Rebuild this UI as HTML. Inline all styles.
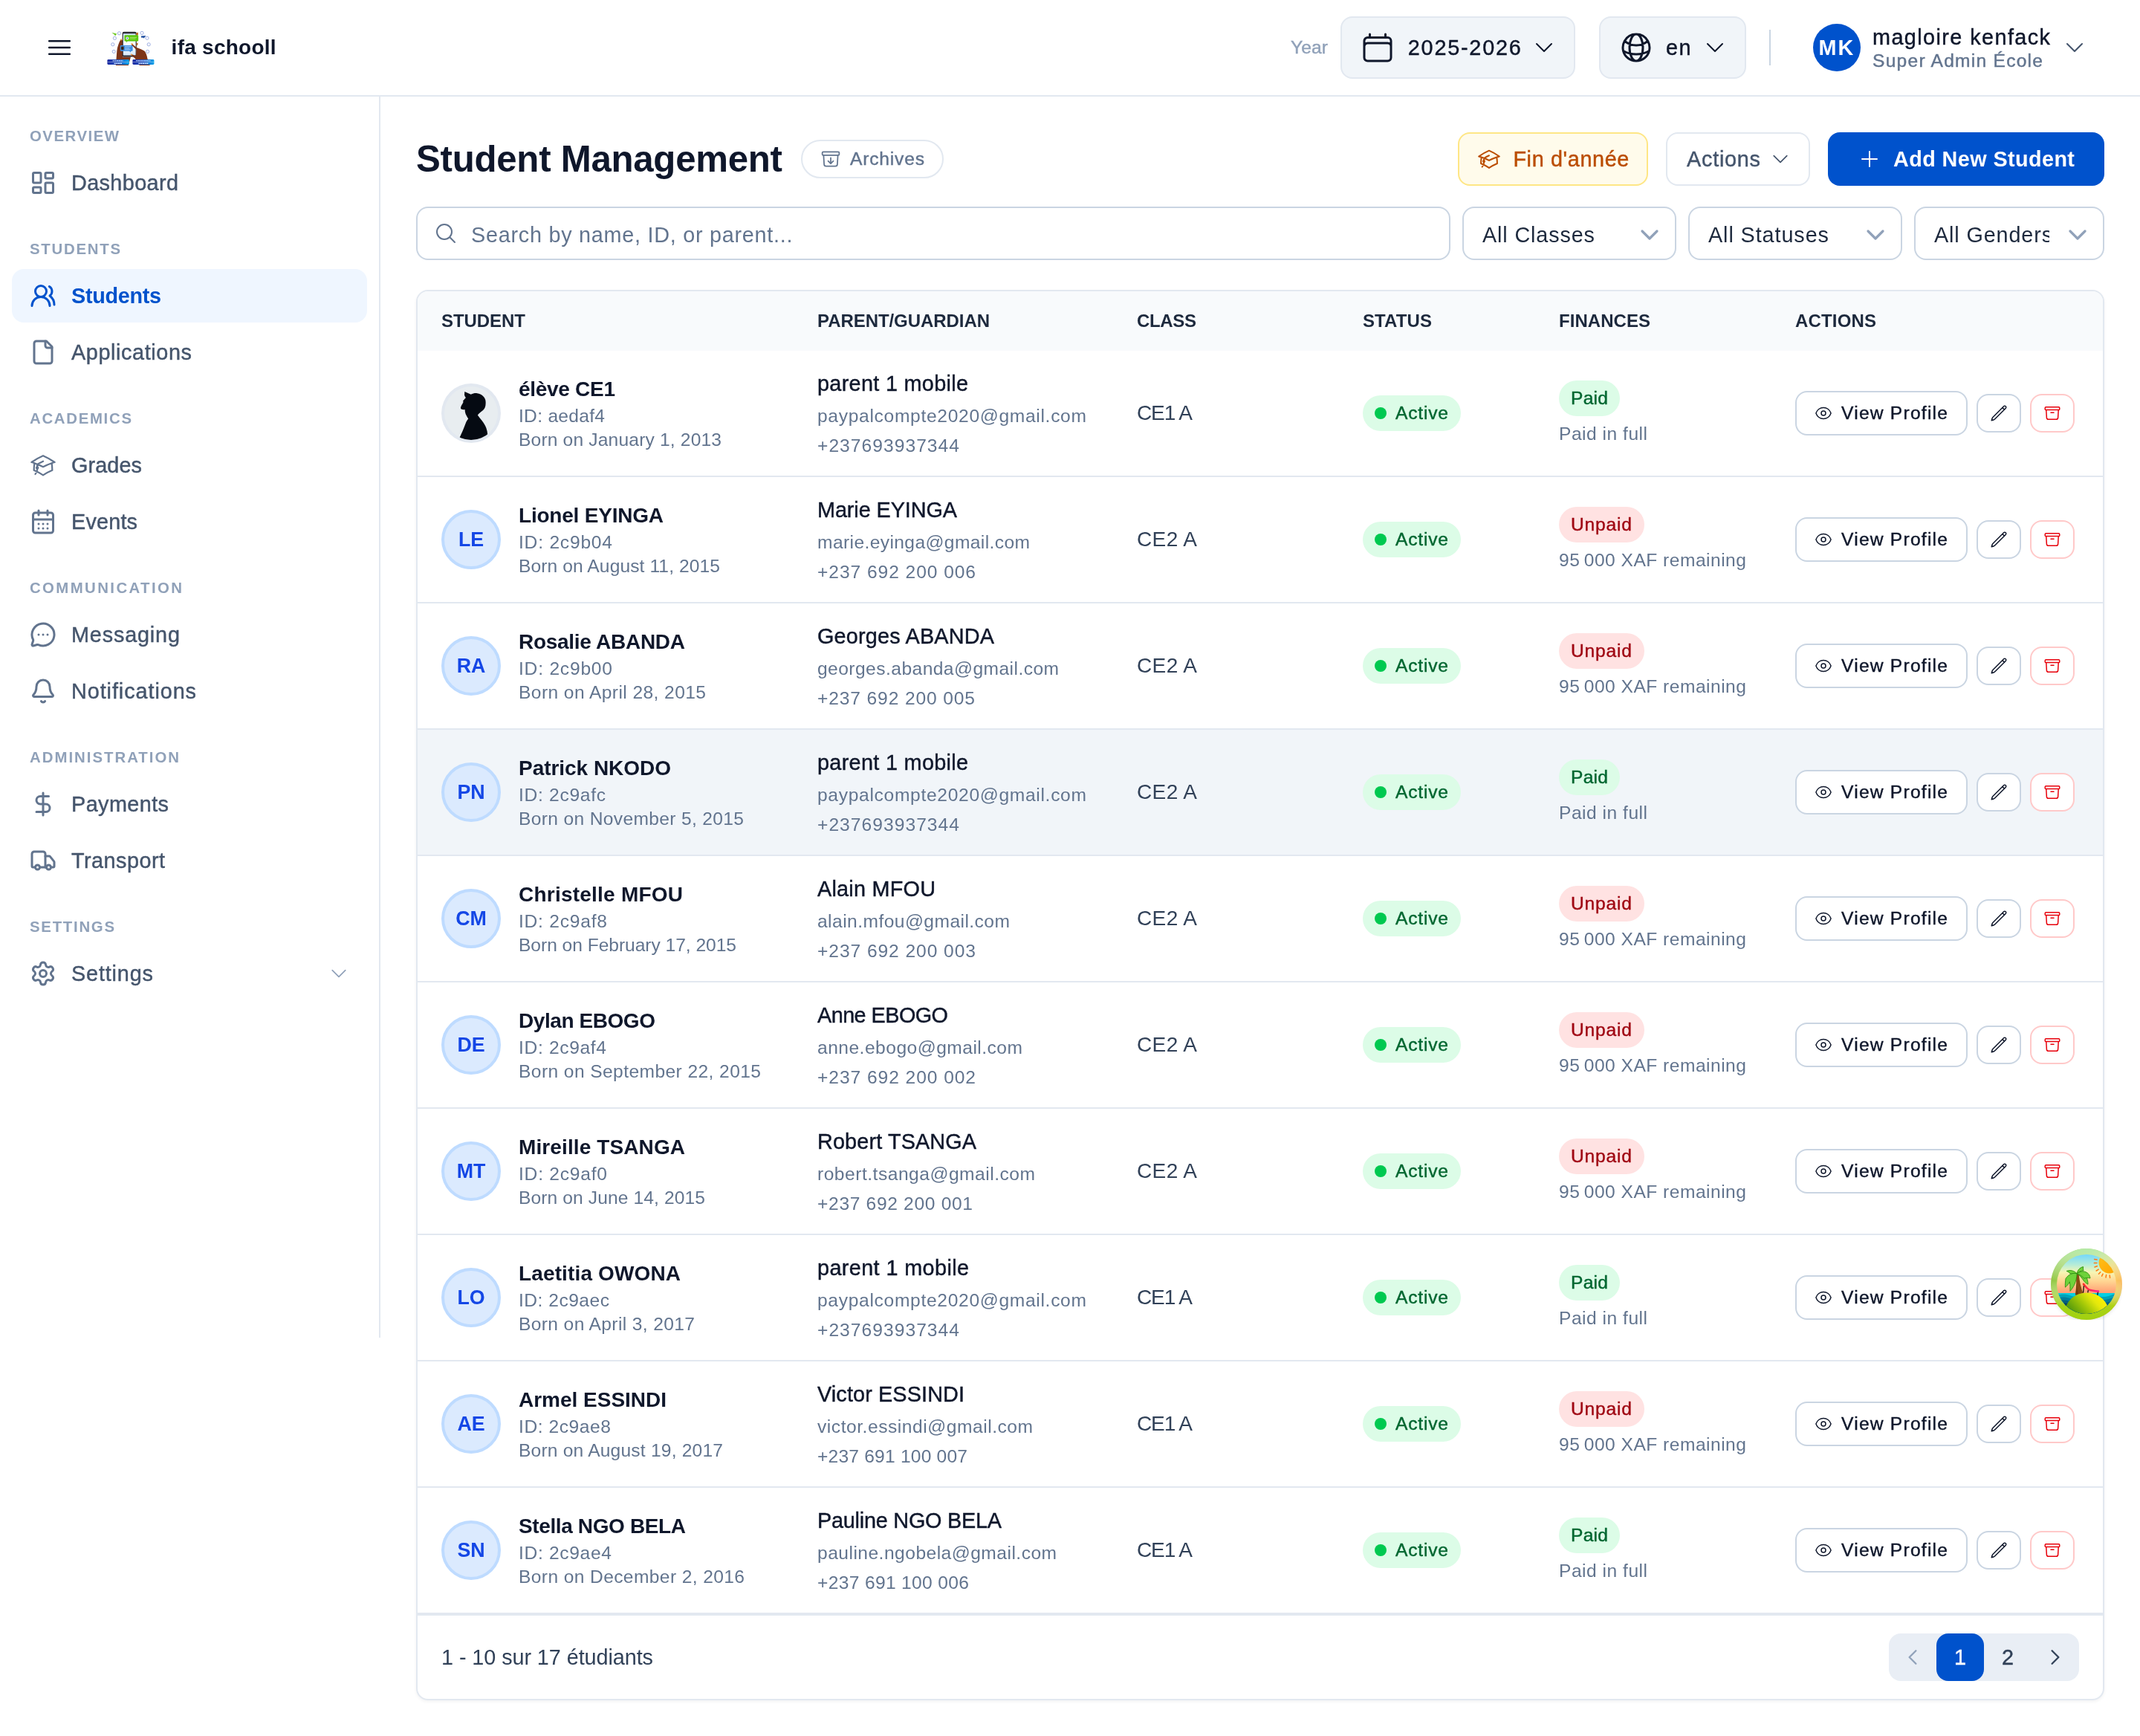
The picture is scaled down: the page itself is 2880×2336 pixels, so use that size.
<!DOCTYPE html>
<html lang="en">
<head>
<meta charset="utf-8">
<title>Student Management</title>
<style>
*{box-sizing:border-box;margin:0;padding:0}
html,body{width:100%;height:100%;overflow:hidden;background:#fff}
body{font-family:"Liberation Sans",Arial,sans-serif;color:#0f172b;-webkit-font-smoothing:antialiased}
#app{position:absolute;left:0;top:0;width:1440px;height:1168px;zoom:2;background:#fff;overflow:hidden;will-change:transform}
button{font:inherit;color:inherit;background:none;border:0;cursor:pointer}
svg.ic{display:block;flex:none}
span{white-space:nowrap}
/* ---------- header ---------- */
.top{position:absolute;left:0;top:0;width:1440px;height:65px;border-bottom:1px solid #e2e8f0;background:#fff}
.top>*{position:absolute}
.hb{left:30px;top:22px;width:20px;height:20px;color:#0f172b}
.logo{left:72px;top:20px;width:32px;height:24px}
.brand{left:115.3px;top:22px;font-size:14px;line-height:20px;font-weight:700;color:#0f172b}
.yearl{left:868.5px;top:24px;font-size:12.3px;line-height:16px;color:#90a1b9}
.hsel{top:11px;height:42px;background:#f1f5f9;border:1px solid #e2e8f0;border-radius:8px;font-size:14.4px;line-height:20px;color:#0f172b}
.hsel>*{position:absolute}
.hsel svg.ic{top:8px}
.hsel span{top:10px}
.hsel svg.hc{top:12px}
.ysel{left:902px;width:158px}
.ysel svg.ic:first-child{left:12px}
.ysel span{left:44.4px}
.ysel svg.hc{left:128px}
.lsel{left:1076px;width:99px}
.lsel svg.ic:first-child{left:12px}
.lsel span{left:44px}
.lsel svg.hc{left:69px}
.vdiv{left:1190.5px;top:20px;width:1px;height:24px;background:#cad5e2}
.uav{left:1220px;top:16px;width:32px;height:32px;border-radius:50%;background:#0052cc;color:#fff;font-size:14.4px;font-weight:700;display:flex;align-items:center;justify-content:center}
.uname{left:1260px;top:15px;font-size:14.4px;line-height:20px;color:#0f172b}
.urole{left:1260px;top:33px;font-size:12.3px;line-height:16px;color:#62748e}
.uchev{left:1388px;top:24px;color:#45556c}
/* ---------- sidebar ---------- */
.side{position:absolute;left:0;top:65px;width:256px;height:835px;border-right:1px solid #e2e8f0;background:#fff;padding:0 8px}
.ng{height:16px;margin:18px 0 6px;padding:.5px 0 0 12px;font-size:10.2px;line-height:16px;font-weight:700;color:#90a1b9;letter-spacing:1px}
.ni{display:flex;align-items:center;height:36px;margin-bottom:2px;padding:0 12px;border-radius:8px;color:#45556c;font-size:14.4px;line-height:20px}
.ni svg.ic{color:#62748e;margin-right:10px}
.ni.on{background:#eff6ff;color:#0052cc;font-weight:700}
.ni.on svg.ic{color:#0052cc}
.ni svg.nchev{margin-left:auto;margin-right:0;color:#90a1b9}

/* ---------- main ---------- */
main{position:absolute;left:0;top:0;width:1440px;height:1168px;pointer-events:none}
main>*{position:absolute}
h1{left:280px;top:91px;font-size:24.6px;line-height:32px;font-weight:700;color:#0f172b}
.arch{left:539px;top:94px;height:26px;width:96px;border:1px solid #e2e8f0;border-radius:13px;display:flex;align-items:center;padding-left:12px;font-size:12.3px;line-height:16px;color:#62748e;background:#fff}
.arch svg.ic{margin-right:6px;color:#62748e}
.btn{top:89px;height:36px;border-radius:8px;display:flex;align-items:center;font-size:14.4px;line-height:20px}
.fin{left:981px;width:128px;background:#fffbeb;border:1px solid #fee685;color:#bb4d00;padding-left:12.2px}
.fin svg.ic{margin-right:8px}
.actb{left:1121px;width:97px;background:#fff;border:1px solid #e2e8f0;color:#45556c;padding-left:13px}
.actb svg.ic{position:absolute;left:69px;top:10px;color:#45556c}
.add{left:1230px;width:186px;background:#0052cc;color:#fff;font-weight:700;padding-left:20px}
.add svg.ic{margin-right:8px}
.search{left:280px;top:139px;width:696px;height:36px;border:1px solid #cad5e2;border-radius:8px;background:#fff;display:flex;align-items:center;padding-left:11px;font-size:14.4px;color:#62748e}
.search svg.ic{margin-right:9px;color:#62748e}
.fsel{top:139px;height:36px;border:1px solid #cad5e2;border-radius:8px;background:#fff;display:flex;align-items:center;padding-left:12.5px;font-size:14.4px;color:#1d293d}
.fsel svg.ic{position:absolute;right:9px;top:10px;color:#90a1b9}
.s1{left:984px;width:144px}.s2{left:1136px;width:144px}.s3{left:1288px;width:128px}
.clip{display:block;overflow:hidden;width:77.5px}
/* ---------- card ---------- */
.card{left:280px;top:195px;width:1136px;height:949px;border:1px solid #e2e8f0;border-radius:8px;background:#fff;overflow:hidden;box-shadow:0 1px 2px rgba(15,23,42,.05)}
.thead{display:flex;height:40px;background:#f8fafc}
.th{padding-left:16px;font-size:12px;line-height:40px;font-weight:700;color:#1d293d}
.c1{width:253px}.c2{width:215px}.c3{width:152px}.c4{width:132px}.c5{width:159px}.c6{width:223px}
.tr{display:flex;height:85px;border-bottom:1px solid #e2e8f0}
.tr.hov{background:#f1f5f9}
.td{padding-left:16px;display:flex;align-items:center;height:84px}
.av{width:40px;height:40px;border-radius:50%;background:#dbeafe;border:2px solid #bedbff;color:#1447e6;font-size:13.4px;font-weight:700;display:flex;align-items:center;justify-content:center;flex:none}
.photo{flex:none;display:block}
.stu{margin-left:12px}
.nm{font-size:14px;line-height:20px;font-weight:700;color:#0f172b}
.sub{font-size:12.3px;line-height:16px;color:#62748e}
.pn{font-size:14.4px;line-height:20px;color:#0f172b}
.pe{margin-top:4px}
.kl{font-size:14px;color:#314158}
.pill{display:inline-flex;align-items:center;height:24px;border-radius:12px;padding:0 8px;font-size:12.3px;line-height:16px}
.act{background:#dcfce7;color:#016630}
.dot{display:block;width:8px;height:8px;border-radius:50%;background:#00c950;margin-right:6px}
.paid{background:#dcfce7;color:#016630}
.unpaid{background:#ffe2e2;color:#9f0712}
.fsub{margin-top:4px}
.vb{height:30px;width:116px;border:1px solid #cad5e2;border-radius:8px;background:#fff;display:flex;align-items:center;padding-left:12px;font-size:12.3px;color:#0f172b}
.vb svg.ic{margin-right:6px}
.ib{height:26px;width:30px;margin-left:6px;border:1px solid #cad5e2;border-radius:8px;background:#fff;display:flex;align-items:center;justify-content:center;color:#0f172b}
.ib.del{border-color:#ffc9c9;color:#e7000b}
.tfoot{position:relative;height:58px;border-top:1px solid #e2e8f0}
.cnt{position:absolute;left:16px;top:18px;font-size:14.4px;line-height:20px;color:#314158}
.pager{position:absolute;right:16px;top:12px;height:32px;width:128px;background:#e9eef5;border-radius:8px;display:flex}
.pg{width:32px;height:32px;display:flex;align-items:center;justify-content:center;font-size:14.4px;color:#314158;border-radius:8px}
.pg.cur{background:#0052cc;color:#fff}
.fab{position:absolute;left:1380px;top:840px;width:48px;height:48px;border-radius:50%}

.pg svg.ic{color:#314158}
.pg:first-child svg.ic{color:#90a1b9}
.m{-webkit-text-stroke:.22px currentColor}

.search span{position:relative;top:1.3px}.fsel span{position:relative;top:1.3px}

@media (max-width:2000px){#app{zoom:1}}
.fsel .clip span{top:0}

</style>
</head>
<body>
<div id="app">
<header class="top">
<button class="hb"><svg class="ic " width="20" height="20" viewBox="0 0 24 24" fill="none" stroke="currentColor" stroke-width="1.6" stroke-linecap="round" stroke-linejoin="round"><path d="M3.75 6.75h16.5M3.75 12h16.5m-16.5 5.25h16.5"/></svg></button>
<div class="logo"><svg width="32" height="24" viewBox="0 0 32 24"><defs><linearGradient id="lgb" x1="0" x2="1" y1="0" y2="0"><stop offset="0" stop-color="#1c2aa0"/><stop offset=".55" stop-color="#1f58c8"/><stop offset="1" stop-color="#08a4ea"/></linearGradient><linearGradient id="lgs" x1="0" x2="0" y1="0" y2="1"><stop offset="0" stop-color="#cfe4fb"/><stop offset=".5" stop-color="#ffffff"/><stop offset="1" stop-color="#d6e8fb"/></linearGradient></defs>
<g fill="none" stroke="#7f95d8" stroke-width=".45" opacity=".85"><circle cx="8.2" cy="2.4" r="1.05"/><circle cx="5.2" cy="5.7" r="1.05"/><circle cx="3.9" cy="9.9" r="1.05"/><circle cx="4.6" cy="14.7" r="1.05"/><circle cx="23.5" cy="2.2" r="1.05"/><circle cx="27" cy="5.6" r="1.05"/><circle cx="28.1" cy="9.9" r="1.05"/><circle cx="27.3" cy="14.7" r="1.05"/></g>
<path d="M3.2 1.9 6.6 2.7 5.6 4.1 4.9 3.3Z" fill="#6cc820"/>
<path d="M22.8 4.2 26.2 4 24.8 5.8 24 5.1 23.4 5.6Z" fill="#17489c"/>
<path d="M5.9 24 6.7 14 C7 11.5 8 8.5 9.3 6.5 L10.9 7.4 10.5 18.2 16 18.2 14.4 24Z" fill="#7d3418"/>
<rect x="10.3" y="1.4" width="9.6" height="16.9" rx="1.1" fill="#2b2b33"/>
<rect x="10.9" y="2.6" width="8.4" height="14.6" rx=".3" fill="url(#lgs)"/>
<path d="M19.6 2.2 20.9 1.8 21 3.4 19.8 4.2Z M19.9 6.2 21 5.9 21 7.3 19.9 7.9Z M19.9 9 20.8 8.7 20.7 10.2 19.9 10.7Z" fill="#c2691f"/>
<path d="M12.2 3.6h8.4a.5.5 0 0 1 .5.5v3.1a.5.5 0 0 1-.5.5h-6.9l-.6.9-.2-.9h-.7a.5.5 0 0 1-.5-.5V4.1a.5.5 0 0 1 .5-.5Z" fill="#5cc80c"/>
<circle cx="13.7" cy="5.7" r="1" fill="#fff"/><circle cx="13.7" cy="5.7" r=".45" fill="#2456c8"/>
<path d="M15.3 5.2h4.6M15.3 6.1h4" stroke="#c9f09a" stroke-width=".35"/>
<path d="M9.4 10.5h7.4a.5.5 0 0 1 .5.5v2.9a.5.5 0 0 1-.5.5h-.6l-.3.8-.9-.8H9.4a.5.5 0 0 1-.5-.5V11a.5.5 0 0 1 .5-.5Z" fill="#3c8ee2"/>
<rect x="9.5" y="11.3" width="1.8" height="2.2" rx=".4" fill="#3a2314"/>
<path d="M12 11.3h4.2M12 12.4h3.2M12 13.4h3.8" stroke="#dbeaff" stroke-width=".35"/>
<path d="M16.6 9.3 19.7 11.9 C22 12.8 24 13.4 25.3 14.4 C26.4 15.8 26.9 17.6 27.2 19.4 L28.9 24 21.9 24 18.8 19.2 16 16.9 16.3 16.4 19.4 17.6 19.9 13.6 16.3 10Z" fill="#7d3418"/>
<path d="M16.3 9 17.3 9.2 17.6 10 16.5 10Z M15.8 16.2 16.9 16.4 17 17.3 16 17.1Z M9 6.3 10 6.2 10.4 7 9.4 7.3Z" fill="#f0a04a"/>
<rect x=".2" y="20" width="14.7" height="3.5" rx=".7" fill="url(#lgb)"/>
<rect x="17.2" y="20" width="14.5" height="3.5" rx=".7" fill="url(#lgb)"/>
<path d="M.2 21.75h14.7M17.2 21.75h14.5" stroke="#fff" stroke-width=".3" opacity=".55"/>
<path d="M3.8 20.9h7M4.8 22.7h5.4M19.6 20.9h9.8M21.2 22.7h6.6" stroke="#fff" stroke-width=".55" opacity=".9" stroke-dasharray="1.1 .25"/>
</svg>
</div>
<span id="brand" class="brand" style="letter-spacing:0.127px">ifa schooll</span>
<span id="yearl" class="yearl m" style="letter-spacing:0.049px">Year</span>
<div class="hsel ysel"><svg class="ic " width="24" height="24" viewBox="0 0 24 24" fill="none" stroke="currentColor" stroke-width="1.5" stroke-linecap="round" stroke-linejoin="round"><path d="M6.75 3v2.25M17.25 3v2.25M3 18.75V7.5a2.25 2.25 0 0 1 2.25-2.25h13.5A2.25 2.25 0 0 1 21 7.5v11.25m-18 0A2.25 2.25 0 0 0 5.25 21h13.5A2.25 2.25 0 0 0 21 18.75m-18 0v-7.5A2.25 2.25 0 0 1 5.25 9h13.5A2.25 2.25 0 0 1 21 11.25v7.5"/></svg><span id="yearv" class="m" style="letter-spacing:0.891px">2025-2026</span><svg class="ic hc" width="16" height="16" viewBox="0 0 24 24" fill="none" stroke="currentColor" stroke-width="1.5" stroke-linecap="round" stroke-linejoin="round"><path d="m19.5 8.25-7.5 7.5-7.5-7.5"/></svg></div>
<div class="hsel lsel"><svg class="ic " width="24" height="24" viewBox="0 0 24 24" fill="none" stroke="currentColor" stroke-width="1.5" stroke-linecap="round" stroke-linejoin="round"><path d="M12 21a9.004 9.004 0 0 0 8.716-6.747M12 21a9.004 9.004 0 0 1-8.716-6.747M12 21c2.485 0 4.5-4.03 4.5-9S14.485 3 12 3m0 18c-2.485 0-4.5-4.03-4.5-9S9.515 3 12 3m0 0a8.997 8.997 0 0 1 7.843 4.582M12 3a8.997 8.997 0 0 0-7.843 4.582m15.686 0A11.953 11.953 0 0 1 12 10.5c-2.998 0-5.74-1.1-7.843-2.918m15.686 0A8.959 8.959 0 0 1 21 12c0 .778-.099 1.533-.284 2.253m0 0A17.919 17.919 0 0 1 12 16.5c-3.162 0-6.133-.815-8.716-2.247m0 0A9.015 9.015 0 0 1 3 12c0-1.605.42-3.113 1.157-4.418"/></svg><span id="langv" class="m" style="letter-spacing:0.680px">en</span><svg class="ic hc" width="16" height="16" viewBox="0 0 24 24" fill="none" stroke="currentColor" stroke-width="1.5" stroke-linecap="round" stroke-linejoin="round"><path d="m19.5 8.25-7.5 7.5-7.5-7.5"/></svg></div>
<div class="vdiv"></div>
<div class="uav"><span id="mk" style="letter-spacing:1.102px">MK</span></div>
<div class="uname"><span id="un" class="m" style="letter-spacing:0.710px">magloire kenfack</span></div>
<div class="urole"><span id="ur" class="m" style="letter-spacing:0.620px">Super Admin École</span></div>
<svg class="ic uchev" width="16" height="16" viewBox="0 0 24 24" fill="none" stroke="currentColor" stroke-width="1.5" stroke-linecap="round" stroke-linejoin="round"><path d="m19.5 8.25-7.5 7.5-7.5-7.5"/></svg>
</header>
<aside class="side">
<div class="ng"><span id="g0" style="letter-spacing:0.746px">OVERVIEW</span></div>
<a class="ni"><svg class="ic " width="18" height="18" viewBox="0 0 24 24" fill="none" stroke="currentColor" stroke-width="2" stroke-linecap="round" stroke-linejoin="round"><rect x="3" y="3" width="7" height="9" rx="1"/><rect x="14" y="3" width="7" height="5" rx="1"/><rect x="14" y="12" width="7" height="9" rx="1"/><rect x="3" y="16" width="7" height="5" rx="1"/></svg><span id="n0" class="nl m" style="letter-spacing:0.194px">Dashboard</span></a>
<div class="ng"><span id="g1" style="letter-spacing:0.865px">STUDENTS</span></div>
<a class="ni on"><svg class="ic " width="18" height="18" viewBox="0 0 24 24" fill="none" stroke="currentColor" stroke-width="2" stroke-linecap="round" stroke-linejoin="round"><path d="M18 21a8 8 0 0 0-16 0"/><circle cx="10" cy="8" r="5"/><path d="M22 20c0-3.37-2-6.5-4-8a5 5 0 0 0-.45-8.3"/></svg><span id="n1" class="nl" style="letter-spacing:-0.157px">Students</span></a>
<a class="ni"><svg class="ic " width="18" height="18" viewBox="0 0 24 24" fill="none" stroke="currentColor" stroke-width="2" stroke-linecap="round" stroke-linejoin="round"><path d="M15 2H6a2 2 0 0 0-2 2v16a2 2 0 0 0 2 2h12a2 2 0 0 0 2-2V7Z"/><path d="M14 2v4a2 2 0 0 0 2 2h4"/></svg><span id="n2" class="nl m" style="letter-spacing:0.305px">Applications</span></a>
<div class="ng"><span id="g2" style="letter-spacing:0.844px">ACADEMICS</span></div>
<a class="ni"><svg class="ic " width="18" height="18" viewBox="0 0 24 24" fill="none" stroke="currentColor" stroke-width="1.5" stroke-linecap="round" stroke-linejoin="round"><path d="M4.26 10.147a60.438 60.438 0 0 0-.491 6.347A48.62 48.62 0 0 1 12 20.904a48.62 48.62 0 0 1 8.232-4.41 60.46 60.46 0 0 0-.491-6.347m-15.482 0a50.636 50.636 0 0 0-2.658-.813A59.906 59.906 0 0 1 12 3.493a59.903 59.903 0 0 1 10.399 5.84c-.896.248-1.783.52-2.658.814m-15.482 0A50.717 50.717 0 0 1 12 13.489a50.702 50.702 0 0 1 7.74-3.342M6.75 15a.75.75 0 1 0 0-1.5.75.75 0 0 0 0 1.5Zm0 0v-3.675A55.378 55.378 0 0 1 12 8.443m-7.007 11.55A5.981 5.981 0 0 0 6.75 15.75v-1.5"/></svg><span id="n3" class="nl m" style="letter-spacing:0.056px">Grades</span></a>
<a class="ni"><svg class="ic " width="18" height="18" viewBox="0 0 24 24" fill="none" stroke="currentColor" stroke-width="2" stroke-linecap="round" stroke-linejoin="round"><path d="M8 2v4"/><path d="M16 2v4"/><rect width="18" height="18" x="3" y="4" rx="2"/><path d="M3 10h18"/><path d="M8 14h.01"/><path d="M12 14h.01"/><path d="M16 14h.01"/><path d="M8 18h.01"/><path d="M12 18h.01"/><path d="M16 18h.01"/></svg><span id="n4" class="nl m" style="letter-spacing:0.095px">Events</span></a>
<div class="ng"><span id="g3" style="letter-spacing:1.195px">COMMUNICATION</span></div>
<a class="ni"><svg class="ic " width="18" height="18" viewBox="0 0 24 24" fill="none" stroke="currentColor" stroke-width="2" stroke-linecap="round" stroke-linejoin="round"><path d="M2.992 16.342a2 2 0 0 1 .094 1.167l-1.065 3.29a1 1 0 0 0 1.236 1.168l3.413-.998a2 2 0 0 1 1.099.092 10 10 0 1 0-4.777-4.719"/><path d="M8 12h.01"/><path d="M12 12h.01"/><path d="M16 12h.01"/></svg><span id="n5" class="nl m" style="letter-spacing:0.420px">Messaging</span></a>
<a class="ni"><svg class="ic " width="18" height="18" viewBox="0 0 24 24" fill="none" stroke="currentColor" stroke-width="2" stroke-linecap="round" stroke-linejoin="round"><path d="M10.268 21a2 2 0 0 0 3.464 0"/><path d="M3.262 15.326A1 1 0 0 0 4 17h16a1 1 0 0 0 .74-1.673C19.41 13.956 18 12.499 18 8A6 6 0 0 0 6 8c0 4.499-1.411 5.956-2.738 7.326"/></svg><span id="n6" class="nl m" style="letter-spacing:0.464px">Notifications</span></a>
<div class="ng"><span id="g4" style="letter-spacing:0.992px">ADMINISTRATION</span></div>
<a class="ni"><svg class="ic " width="18" height="18" viewBox="0 0 24 24" fill="none" stroke="currentColor" stroke-width="2" stroke-linecap="round" stroke-linejoin="round"><line x1="12" x2="12" y1="2" y2="22"/><path d="M17 5H9.5a3.5 3.5 0 0 0 0 7h5a3.5 3.5 0 0 1 0 7H6"/></svg><span id="n7" class="nl m" style="letter-spacing:0.210px">Payments</span></a>
<a class="ni"><svg class="ic " width="18" height="18" viewBox="0 0 24 24" fill="none" stroke="currentColor" stroke-width="2" stroke-linecap="round" stroke-linejoin="round"><path d="M14 18V6a2 2 0 0 0-2-2H4a2 2 0 0 0-2 2v11a1 1 0 0 0 1 1h2"/><path d="M15 18H9"/><path d="M19 18h2a1 1 0 0 0 1-1v-3.65a1 1 0 0 0-.22-.624l-3.48-4.35A1 1 0 0 0 17.52 8H14"/><circle cx="17" cy="18" r="2"/><circle cx="7" cy="18" r="2"/></svg><span id="n8" class="nl m" style="letter-spacing:0.241px">Transport</span></a>
<div class="ng"><span id="g5" style="letter-spacing:0.860px">SETTINGS</span></div>
<a class="ni"><svg class="ic " width="18" height="18" viewBox="0 0 24 24" fill="none" stroke="currentColor" stroke-width="2" stroke-linecap="round" stroke-linejoin="round"><path d="M9.671 4.136a2.34 2.34 0 0 1 4.659 0 2.34 2.34 0 0 0 3.319 1.915 2.34 2.34 0 0 1 2.33 4.033 2.34 2.34 0 0 0 0 3.831 2.34 2.34 0 0 1-2.33 4.033 2.34 2.34 0 0 0-3.319 1.915 2.34 2.34 0 0 1-4.659 0 2.34 2.34 0 0 0-3.32-1.915 2.34 2.34 0 0 1-2.33-4.033 2.34 2.34 0 0 0 0-3.831A2.34 2.34 0 0 1 6.35 6.051a2.34 2.34 0 0 0 3.319-1.915"/><circle cx="12" cy="12" r="3"/></svg><span id="n9" class="nl m" style="letter-spacing:0.423px">Settings</span><svg class="ic nchev" width="14" height="14" viewBox="0 0 24 24" fill="none" stroke="currentColor" stroke-width="1.5" stroke-linecap="round" stroke-linejoin="round"><path d="m19.5 8.25-7.5 7.5-7.5-7.5"/></svg></a>
</aside>
<main>
<h1><span id="h1" style="letter-spacing:-0.129px">Student Management</span></h1>
<a class="arch"><svg class="ic " width="14" height="14" viewBox="0 0 24 24" fill="none" stroke="currentColor" stroke-width="1.5" stroke-linecap="round" stroke-linejoin="round"><path d="m20.25 7.5-.625 10.632a2.25 2.25 0 0 1-2.247 2.118H6.622a2.25 2.25 0 0 1-2.247-2.118L3.75 7.5m8.25 3v6.75m0 0-3-3m3 3 3-3M3.375 7.5h17.25c.621 0 1.125-.504 1.125-1.125v-1.5c0-.621-.504-1.125-1.125-1.125H3.375c-.621 0-1.125.504-1.125 1.125v1.5c0 .621.504 1.125 1.125 1.125Z"/></svg><span id="archt" class="m" style="letter-spacing:0.406px">Archives</span></a>
<button class="btn fin"><svg class="ic " width="16" height="16" viewBox="0 0 24 24" fill="none" stroke="currentColor" stroke-width="1.5" stroke-linecap="round" stroke-linejoin="round"><path d="M4.26 10.147a60.438 60.438 0 0 0-.491 6.347A48.62 48.62 0 0 1 12 20.904a48.62 48.62 0 0 1 8.232-4.41 60.46 60.46 0 0 0-.491-6.347m-15.482 0a50.636 50.636 0 0 0-2.658-.813A59.906 59.906 0 0 1 12 3.493a59.903 59.903 0 0 1 10.399 5.84c-.896.248-1.783.52-2.658.814m-15.482 0A50.717 50.717 0 0 1 12 13.489a50.702 50.702 0 0 1 7.74-3.342M6.75 15a.75.75 0 1 0 0-1.5.75.75 0 0 0 0 1.5Zm0 0v-3.675A55.378 55.378 0 0 1 12 8.443m-7.007 11.55A5.981 5.981 0 0 0 6.75 15.75v-1.5"/></svg><span id="fint" class="m" style="letter-spacing:0.320px">Fin d'année</span></button>
<button class="btn actb"><span id="actt" class="m" style="letter-spacing:0.380px">Actions</span><svg class="ic " width="14" height="14" viewBox="0 0 24 24" fill="none" stroke="currentColor" stroke-width="1.5" stroke-linecap="round" stroke-linejoin="round"><path d="m19.5 8.25-7.5 7.5-7.5-7.5"/></svg></button>
<button class="btn add"><svg class="ic " width="16" height="16" viewBox="0 0 24 24" fill="none" stroke="currentColor" stroke-width="1.5" stroke-linecap="round" stroke-linejoin="round"><path d="M12 4.5v15m7.5-7.5h-15"/></svg><span id="addt" style="letter-spacing:0.200px">Add New Student</span></button>
<div class="search"><svg class="ic " width="16" height="16" viewBox="0 0 24 24" fill="none" stroke="currentColor" stroke-width="1.5" stroke-linecap="round" stroke-linejoin="round"><path d="m21 21-5.197-5.197m0 0A7.5 7.5 0 1 0 5.196 5.196a7.5 7.5 0 0 0 10.607 10.607Z"/></svg><span id="ph" style="letter-spacing:0.367px">Search by name, ID, or parent...</span></div>
<div class="fsel s1"><span id="f1" style="letter-spacing:0.428px">All Classes</span><svg class="ic " width="16" height="16" viewBox="0 0 24 24" fill="none" stroke="currentColor" stroke-width="2.4" stroke-linecap="round" stroke-linejoin="round"><path d="m19.5 8.25-7.5 7.5-7.5-7.5"/></svg></div>
<div class="fsel s2"><span id="f2" style="letter-spacing:0.451px">All Statuses</span><svg class="ic " width="16" height="16" viewBox="0 0 24 24" fill="none" stroke="currentColor" stroke-width="2.4" stroke-linecap="round" stroke-linejoin="round"><path d="m19.5 8.25-7.5 7.5-7.5-7.5"/></svg></div>
<div class="fsel s3"><span class="clip"><span id="f3" style="letter-spacing:0.430px">All Genders</span></span><svg class="ic " width="16" height="16" viewBox="0 0 24 24" fill="none" stroke="currentColor" stroke-width="2.4" stroke-linecap="round" stroke-linejoin="round"><path d="m19.5 8.25-7.5 7.5-7.5-7.5"/></svg></div>
<section class="card">
<div class="thead">
<div class="th c1"><span id="th1" style="letter-spacing:-0.029px">STUDENT</span></div><div class="th c2"><span id="th2" style="letter-spacing:-0.032px">PARENT/GUARDIAN</span></div><div class="th c3"><span id="th3" style="letter-spacing:-0.168px">CLASS</span></div><div class="th c4"><span id="th4" style="letter-spacing:0.056px">STATUS</span></div><div class="th c5"><span id="th5" style="letter-spacing:0.022px">FINANCES</span></div><div class="th c6"><span id="th6" style="letter-spacing:0.083px">ACTIONS</span></div>
</div>
<div class="tr">
<div class="td c1"><svg class="photo" width="40" height="40" viewBox="0 0 40 40"><defs><clipPath id="pc"><circle cx="20" cy="20" r="18"/></clipPath></defs><circle cx="20" cy="20" r="20" fill="#e2e8f0"/><circle cx="20" cy="20" r="18" fill="#e8edf0"/><g clip-path="url(#pc)"><path d="M15.65 5.5 L19.9 7.4 C21.3 6.6 22.8 6.4 24.1 6.6 C25.7 6.9 27 7.5 27.9 8.4 C29.2 9.6 29.85 11 29.8 12.4 C29.9 13.9 29.75 15.2 29.3 16.3 C28.7 17.6 27.8 18.5 26.6 19.1 C25.8 19.7 25 20.4 24.4 21.2 C25.3 22.5 26.2 23.6 27.2 24.9 C28.5 26.5 29.5 28.2 30.2 30 C30.7 31.4 31 32.8 31.1 34.2 L31.5 40 L11.5 40 L12.4 36.1 C13.1 34.500 13.9 33 14.5 31.500 C15.300 29.600 16 27.700 16.700 25.900 C17.100 25.100 17.600 24.400 18.100 23.700 C17.400 22.700 16.800 21.600 16.300 20.500 C16 19.500 15.800 18.500 15.800 17.500 C15.100 17.700 14.300 17.700 13.700 17.400 C13.200 17.200 12.900 16.800 13 16.300 L13.300 15.300 C13.500 14.800 13.800 14.300 14.100 13.900 L14.800 12.400 L14.500 11.700 L15.200 11 C15.600 10.500 16 10.100 16.450 9.650 C16 9.100 15.700 8.500 15.500 7.800 Z" fill="#050a12"/></g></svg><div class="stu"><div class="nm"><span id="nm0" style="letter-spacing:-0.146px">élève CE1</span></div><div class="sub"><span id="id0" style="letter-spacing:0.140px">ID: aedaf4</span></div><div class="sub"><span id="bo0" style="letter-spacing:0.083px">Born on January 1, 2013</span></div></div></div>
<div class="td c2"><div class="par"><div class="pn"><span id="pn0" class="m" style="letter-spacing:0.160px">parent 1 mobile</span></div><div class="sub pe"><span id="em0" style="letter-spacing:0.342px">paypalcompte2020@gmail.com</span></div><div class="sub pe"><span id="ph0" style="letter-spacing:0.520px">+237693937344</span></div></div></div>
<div class="td c3"><span id="kl0" class="kl" style="letter-spacing:-0.549px">CE1 A</span></div>
<div class="td c4"><span class="pill act"><i class="dot"></i><span id="st0" class="m" style="letter-spacing:0.402px">Active</span></span></div>
<div class="td c5"><div><span class="pill paid"><span id="fp0" class="m" style="letter-spacing:0.128px">Paid</span></span><div class="sub fsub"><span id="fs0" style="letter-spacing:0.251px">Paid in full</span></div></div></div>
<div class="td c6"><button class="vb"><svg class="ic " width="12" height="12" viewBox="0 0 24 24" fill="none" stroke="currentColor" stroke-width="1.5" stroke-linecap="round" stroke-linejoin="round"><path d="M2.036 12.322a1.012 1.012 0 0 1 0-.639C3.423 7.51 7.36 4.5 12 4.5c4.638 0 8.573 3.007 9.963 7.178.07.207.07.431 0 .639C20.577 16.49 16.64 19.5 12 19.5c-4.638 0-8.573-3.007-9.963-7.178Z"/><path d="M15 12a3 3 0 1 1-6 0 3 3 0 0 1 6 0Z"/></svg><span id="vp0" class="m" style="letter-spacing:0.617px">View Profile</span></button><button class="ib"><svg class="ic " width="12" height="12" viewBox="0 0 24 24" fill="none" stroke="currentColor" stroke-width="1.5" stroke-linecap="round" stroke-linejoin="round"><path d="m16.862 4.487 1.687-1.688a1.875 1.875 0 1 1 2.652 2.652L6.832 19.82a4.5 4.5 0 0 1-1.897 1.13l-2.685.8.8-2.685a4.5 4.5 0 0 1 1.13-1.897L16.863 4.487Zm0 0L19.5 7.125"/></svg></button><button class="ib del"><svg class="ic " width="12" height="12" viewBox="0 0 24 24" fill="none" stroke="currentColor" stroke-width="1.5" stroke-linecap="round" stroke-linejoin="round"><path d="m20.25 7.5-.625 10.632a2.25 2.25 0 0 1-2.247 2.118H6.622a2.25 2.25 0 0 1-2.247-2.118L3.75 7.5M10 11.25h4M3.375 7.5h17.25c.621 0 1.125-.504 1.125-1.125v-1.5c0-.621-.504-1.125-1.125-1.125H3.375c-.621 0-1.125.504-1.125 1.125v1.5c0 .621.504 1.125 1.125 1.125Z"/></svg></button></div>
</div>
<div class="tr">
<div class="td c1"><div class="av"><span id="ini1">LE</span></div><div class="stu"><div class="nm"><span id="nm1" style="letter-spacing:-0.107px">Lionel EYINGA</span></div><div class="sub"><span id="id1" style="letter-spacing:0.391px">ID: 2c9b04</span></div><div class="sub"><span id="bo1" style="letter-spacing:0.047px">Born on August 11, 2015</span></div></div></div>
<div class="td c2"><div class="par"><div class="pn"><span id="pn1" class="m" style="letter-spacing:-0.037px">Marie EYINGA</span></div><div class="sub pe"><span id="em1" style="letter-spacing:0.195px">marie.eyinga@gmail.com</span></div><div class="sub pe"><span id="ph1" style="letter-spacing:0.468px">+237 692 200 006</span></div></div></div>
<div class="td c3"><span id="kl1" class="kl" style="letter-spacing:0.201px">CE2 A</span></div>
<div class="td c4"><span class="pill act"><i class="dot"></i><span id="st1" class="m" style="letter-spacing:0.402px">Active</span></span></div>
<div class="td c5"><div><span class="pill unpaid"><span id="fp1" class="m" style="letter-spacing:0.406px">Unpaid</span></span><div class="sub fsub"><span id="fs1" style="letter-spacing:0.241px">95&#8239;000 XAF remaining</span></div></div></div>
<div class="td c6"><button class="vb"><svg class="ic " width="12" height="12" viewBox="0 0 24 24" fill="none" stroke="currentColor" stroke-width="1.5" stroke-linecap="round" stroke-linejoin="round"><path d="M2.036 12.322a1.012 1.012 0 0 1 0-.639C3.423 7.51 7.36 4.5 12 4.5c4.638 0 8.573 3.007 9.963 7.178.07.207.07.431 0 .639C20.577 16.49 16.64 19.5 12 19.5c-4.638 0-8.573-3.007-9.963-7.178Z"/><path d="M15 12a3 3 0 1 1-6 0 3 3 0 0 1 6 0Z"/></svg><span id="vp1" class="m" style="letter-spacing:0.617px">View Profile</span></button><button class="ib"><svg class="ic " width="12" height="12" viewBox="0 0 24 24" fill="none" stroke="currentColor" stroke-width="1.5" stroke-linecap="round" stroke-linejoin="round"><path d="m16.862 4.487 1.687-1.688a1.875 1.875 0 1 1 2.652 2.652L6.832 19.82a4.5 4.5 0 0 1-1.897 1.13l-2.685.8.8-2.685a4.5 4.5 0 0 1 1.13-1.897L16.863 4.487Zm0 0L19.5 7.125"/></svg></button><button class="ib del"><svg class="ic " width="12" height="12" viewBox="0 0 24 24" fill="none" stroke="currentColor" stroke-width="1.5" stroke-linecap="round" stroke-linejoin="round"><path d="m20.25 7.5-.625 10.632a2.25 2.25 0 0 1-2.247 2.118H6.622a2.25 2.25 0 0 1-2.247-2.118L3.75 7.5M10 11.25h4M3.375 7.5h17.25c.621 0 1.125-.504 1.125-1.125v-1.5c0-.621-.504-1.125-1.125-1.125H3.375c-.621 0-1.125.504-1.125 1.125v1.5c0 .621.504 1.125 1.125 1.125Z"/></svg></button></div>
</div>
<div class="tr">
<div class="td c1"><div class="av"><span id="ini2">RA</span></div><div class="stu"><div class="nm"><span id="nm2" style="letter-spacing:-0.142px">Rosalie ABANDA</span></div><div class="sub"><span id="id2" style="letter-spacing:0.392px">ID: 2c9b00</span></div><div class="sub"><span id="bo2" style="letter-spacing:0.205px">Born on April 28, 2015</span></div></div></div>
<div class="td c2"><div class="par"><div class="pn"><span id="pn2" class="m" style="letter-spacing:0.103px">Georges ABANDA</span></div><div class="sub pe"><span id="em2" style="letter-spacing:0.222px">georges.abanda@gmail.com</span></div><div class="sub pe"><span id="ph2" style="letter-spacing:0.434px">+237 692 200 005</span></div></div></div>
<div class="td c3"><span id="kl2" class="kl" style="letter-spacing:0.201px">CE2 A</span></div>
<div class="td c4"><span class="pill act"><i class="dot"></i><span id="st2" class="m" style="letter-spacing:0.402px">Active</span></span></div>
<div class="td c5"><div><span class="pill unpaid"><span id="fp2" class="m" style="letter-spacing:0.406px">Unpaid</span></span><div class="sub fsub"><span id="fs2" style="letter-spacing:0.241px">95&#8239;000 XAF remaining</span></div></div></div>
<div class="td c6"><button class="vb"><svg class="ic " width="12" height="12" viewBox="0 0 24 24" fill="none" stroke="currentColor" stroke-width="1.5" stroke-linecap="round" stroke-linejoin="round"><path d="M2.036 12.322a1.012 1.012 0 0 1 0-.639C3.423 7.51 7.36 4.5 12 4.5c4.638 0 8.573 3.007 9.963 7.178.07.207.07.431 0 .639C20.577 16.49 16.64 19.5 12 19.5c-4.638 0-8.573-3.007-9.963-7.178Z"/><path d="M15 12a3 3 0 1 1-6 0 3 3 0 0 1 6 0Z"/></svg><span id="vp2" class="m" style="letter-spacing:0.617px">View Profile</span></button><button class="ib"><svg class="ic " width="12" height="12" viewBox="0 0 24 24" fill="none" stroke="currentColor" stroke-width="1.5" stroke-linecap="round" stroke-linejoin="round"><path d="m16.862 4.487 1.687-1.688a1.875 1.875 0 1 1 2.652 2.652L6.832 19.82a4.5 4.5 0 0 1-1.897 1.13l-2.685.8.8-2.685a4.5 4.5 0 0 1 1.13-1.897L16.863 4.487Zm0 0L19.5 7.125"/></svg></button><button class="ib del"><svg class="ic " width="12" height="12" viewBox="0 0 24 24" fill="none" stroke="currentColor" stroke-width="1.5" stroke-linecap="round" stroke-linejoin="round"><path d="m20.25 7.5-.625 10.632a2.25 2.25 0 0 1-2.247 2.118H6.622a2.25 2.25 0 0 1-2.247-2.118L3.75 7.5M10 11.25h4M3.375 7.5h17.25c.621 0 1.125-.504 1.125-1.125v-1.5c0-.621-.504-1.125-1.125-1.125H3.375c-.621 0-1.125.504-1.125 1.125v1.5c0 .621.504 1.125 1.125 1.125Z"/></svg></button></div>
</div>
<div class="tr hov">
<div class="td c1"><div class="av"><span id="ini3">PN</span></div><div class="stu"><div class="nm"><span id="nm3" style="letter-spacing:-0.018px">Patrick NKODO</span></div><div class="sub"><span id="id3" style="letter-spacing:0.348px">ID: 2c9afc</span></div><div class="sub"><span id="bo3" style="letter-spacing:0.167px">Born on November 5, 2015</span></div></div></div>
<div class="td c2"><div class="par"><div class="pn"><span id="pn3" class="m" style="letter-spacing:0.161px">parent 1 mobile</span></div><div class="sub pe"><span id="em3" style="letter-spacing:0.342px">paypalcompte2020@gmail.com</span></div><div class="sub pe"><span id="ph3" style="letter-spacing:0.520px">+237693937344</span></div></div></div>
<div class="td c3"><span id="kl3" class="kl" style="letter-spacing:0.201px">CE2 A</span></div>
<div class="td c4"><span class="pill act"><i class="dot"></i><span id="st3" class="m" style="letter-spacing:0.402px">Active</span></span></div>
<div class="td c5"><div><span class="pill paid"><span id="fp3" class="m" style="letter-spacing:0.128px">Paid</span></span><div class="sub fsub"><span id="fs3" style="letter-spacing:0.251px">Paid in full</span></div></div></div>
<div class="td c6"><button class="vb"><svg class="ic " width="12" height="12" viewBox="0 0 24 24" fill="none" stroke="currentColor" stroke-width="1.5" stroke-linecap="round" stroke-linejoin="round"><path d="M2.036 12.322a1.012 1.012 0 0 1 0-.639C3.423 7.51 7.36 4.5 12 4.5c4.638 0 8.573 3.007 9.963 7.178.07.207.07.431 0 .639C20.577 16.49 16.64 19.5 12 19.5c-4.638 0-8.573-3.007-9.963-7.178Z"/><path d="M15 12a3 3 0 1 1-6 0 3 3 0 0 1 6 0Z"/></svg><span id="vp3" class="m" style="letter-spacing:0.617px">View Profile</span></button><button class="ib"><svg class="ic " width="12" height="12" viewBox="0 0 24 24" fill="none" stroke="currentColor" stroke-width="1.5" stroke-linecap="round" stroke-linejoin="round"><path d="m16.862 4.487 1.687-1.688a1.875 1.875 0 1 1 2.652 2.652L6.832 19.82a4.5 4.5 0 0 1-1.897 1.13l-2.685.8.8-2.685a4.5 4.5 0 0 1 1.13-1.897L16.863 4.487Zm0 0L19.5 7.125"/></svg></button><button class="ib del"><svg class="ic " width="12" height="12" viewBox="0 0 24 24" fill="none" stroke="currentColor" stroke-width="1.5" stroke-linecap="round" stroke-linejoin="round"><path d="m20.25 7.5-.625 10.632a2.25 2.25 0 0 1-2.247 2.118H6.622a2.25 2.25 0 0 1-2.247-2.118L3.75 7.5M10 11.25h4M3.375 7.5h17.25c.621 0 1.125-.504 1.125-1.125v-1.5c0-.621-.504-1.125-1.125-1.125H3.375c-.621 0-1.125.504-1.125 1.125v1.5c0 .621.504 1.125 1.125 1.125Z"/></svg></button></div>
</div>
<div class="tr">
<div class="td c1"><div class="av"><span id="ini4">CM</span></div><div class="stu"><div class="nm"><span id="nm4" style="letter-spacing:0.114px">Christelle MFOU</span></div><div class="sub"><span id="id4" style="letter-spacing:0.382px">ID: 2c9af8</span></div><div class="sub"><span id="bo4" style="letter-spacing:-0.020px">Born on February 17, 2015</span></div></div></div>
<div class="td c2"><div class="par"><div class="pn"><span id="pn4" class="m" style="letter-spacing:0.122px">Alain MFOU</span></div><div class="sub pe"><span id="em4" style="letter-spacing:0.223px">alain.mfou@gmail.com</span></div><div class="sub pe"><span id="ph4" style="letter-spacing:0.467px">+237 692 200 003</span></div></div></div>
<div class="td c3"><span id="kl4" class="kl" style="letter-spacing:0.201px">CE2 A</span></div>
<div class="td c4"><span class="pill act"><i class="dot"></i><span id="st4" class="m" style="letter-spacing:0.402px">Active</span></span></div>
<div class="td c5"><div><span class="pill unpaid"><span id="fp4" class="m" style="letter-spacing:0.406px">Unpaid</span></span><div class="sub fsub"><span id="fs4" style="letter-spacing:0.241px">95&#8239;000 XAF remaining</span></div></div></div>
<div class="td c6"><button class="vb"><svg class="ic " width="12" height="12" viewBox="0 0 24 24" fill="none" stroke="currentColor" stroke-width="1.5" stroke-linecap="round" stroke-linejoin="round"><path d="M2.036 12.322a1.012 1.012 0 0 1 0-.639C3.423 7.51 7.36 4.5 12 4.5c4.638 0 8.573 3.007 9.963 7.178.07.207.07.431 0 .639C20.577 16.49 16.64 19.5 12 19.5c-4.638 0-8.573-3.007-9.963-7.178Z"/><path d="M15 12a3 3 0 1 1-6 0 3 3 0 0 1 6 0Z"/></svg><span id="vp4" class="m" style="letter-spacing:0.617px">View Profile</span></button><button class="ib"><svg class="ic " width="12" height="12" viewBox="0 0 24 24" fill="none" stroke="currentColor" stroke-width="1.5" stroke-linecap="round" stroke-linejoin="round"><path d="m16.862 4.487 1.687-1.688a1.875 1.875 0 1 1 2.652 2.652L6.832 19.82a4.5 4.5 0 0 1-1.897 1.13l-2.685.8.8-2.685a4.5 4.5 0 0 1 1.13-1.897L16.863 4.487Zm0 0L19.5 7.125"/></svg></button><button class="ib del"><svg class="ic " width="12" height="12" viewBox="0 0 24 24" fill="none" stroke="currentColor" stroke-width="1.5" stroke-linecap="round" stroke-linejoin="round"><path d="m20.25 7.5-.625 10.632a2.25 2.25 0 0 1-2.247 2.118H6.622a2.25 2.25 0 0 1-2.247-2.118L3.75 7.5M10 11.25h4M3.375 7.5h17.25c.621 0 1.125-.504 1.125-1.125v-1.5c0-.621-.504-1.125-1.125-1.125H3.375c-.621 0-1.125.504-1.125 1.125v1.5c0 .621.504 1.125 1.125 1.125Z"/></svg></button></div>
</div>
<div class="tr">
<div class="td c1"><div class="av"><span id="ini5">DE</span></div><div class="stu"><div class="nm"><span id="nm5" style="letter-spacing:-0.213px">Dylan EBOGO</span></div><div class="sub"><span id="id5" style="letter-spacing:0.327px">ID: 2c9af4</span></div><div class="sub"><span id="bo5" style="letter-spacing:0.203px">Born on September 22, 2015</span></div></div></div>
<div class="td c2"><div class="par"><div class="pn"><span id="pn5" class="m" style="letter-spacing:-0.270px">Anne EBOGO</span></div><div class="sub pe"><span id="em5" style="letter-spacing:0.238px">anne.ebogo@gmail.com</span></div><div class="sub pe"><span id="ph5" style="letter-spacing:0.468px">+237 692 200 002</span></div></div></div>
<div class="td c3"><span id="kl5" class="kl" style="letter-spacing:0.201px">CE2 A</span></div>
<div class="td c4"><span class="pill act"><i class="dot"></i><span id="st5" class="m" style="letter-spacing:0.402px">Active</span></span></div>
<div class="td c5"><div><span class="pill unpaid"><span id="fp5" class="m" style="letter-spacing:0.406px">Unpaid</span></span><div class="sub fsub"><span id="fs5" style="letter-spacing:0.241px">95&#8239;000 XAF remaining</span></div></div></div>
<div class="td c6"><button class="vb"><svg class="ic " width="12" height="12" viewBox="0 0 24 24" fill="none" stroke="currentColor" stroke-width="1.5" stroke-linecap="round" stroke-linejoin="round"><path d="M2.036 12.322a1.012 1.012 0 0 1 0-.639C3.423 7.51 7.36 4.5 12 4.5c4.638 0 8.573 3.007 9.963 7.178.07.207.07.431 0 .639C20.577 16.49 16.64 19.5 12 19.5c-4.638 0-8.573-3.007-9.963-7.178Z"/><path d="M15 12a3 3 0 1 1-6 0 3 3 0 0 1 6 0Z"/></svg><span id="vp5" class="m" style="letter-spacing:0.617px">View Profile</span></button><button class="ib"><svg class="ic " width="12" height="12" viewBox="0 0 24 24" fill="none" stroke="currentColor" stroke-width="1.5" stroke-linecap="round" stroke-linejoin="round"><path d="m16.862 4.487 1.687-1.688a1.875 1.875 0 1 1 2.652 2.652L6.832 19.82a4.5 4.5 0 0 1-1.897 1.13l-2.685.8.8-2.685a4.5 4.5 0 0 1 1.13-1.897L16.863 4.487Zm0 0L19.5 7.125"/></svg></button><button class="ib del"><svg class="ic " width="12" height="12" viewBox="0 0 24 24" fill="none" stroke="currentColor" stroke-width="1.5" stroke-linecap="round" stroke-linejoin="round"><path d="m20.25 7.5-.625 10.632a2.25 2.25 0 0 1-2.247 2.118H6.622a2.25 2.25 0 0 1-2.247-2.118L3.75 7.5M10 11.25h4M3.375 7.5h17.25c.621 0 1.125-.504 1.125-1.125v-1.5c0-.621-.504-1.125-1.125-1.125H3.375c-.621 0-1.125.504-1.125 1.125v1.5c0 .621.504 1.125 1.125 1.125Z"/></svg></button></div>
</div>
<div class="tr">
<div class="td c1"><div class="av"><span id="ini6">MT</span></div><div class="stu"><div class="nm"><span id="nm6" style="letter-spacing:0.054px">Mireille TSANGA</span></div><div class="sub"><span id="id6" style="letter-spacing:0.384px">ID: 2c9af0</span></div><div class="sub"><span id="bo6" style="letter-spacing:0.053px">Born on June 14, 2015</span></div></div></div>
<div class="td c2"><div class="par"><div class="pn"><span id="pn6" class="m" style="letter-spacing:0.071px">Robert TSANGA</span></div><div class="sub pe"><span id="em6" style="letter-spacing:0.251px">robert.tsanga@gmail.com</span></div><div class="sub pe"><span id="ph6" style="letter-spacing:0.334px">+237 692 200 001</span></div></div></div>
<div class="td c3"><span id="kl6" class="kl" style="letter-spacing:0.201px">CE2 A</span></div>
<div class="td c4"><span class="pill act"><i class="dot"></i><span id="st6" class="m" style="letter-spacing:0.402px">Active</span></span></div>
<div class="td c5"><div><span class="pill unpaid"><span id="fp6" class="m" style="letter-spacing:0.406px">Unpaid</span></span><div class="sub fsub"><span id="fs6" style="letter-spacing:0.241px">95&#8239;000 XAF remaining</span></div></div></div>
<div class="td c6"><button class="vb"><svg class="ic " width="12" height="12" viewBox="0 0 24 24" fill="none" stroke="currentColor" stroke-width="1.5" stroke-linecap="round" stroke-linejoin="round"><path d="M2.036 12.322a1.012 1.012 0 0 1 0-.639C3.423 7.51 7.36 4.5 12 4.5c4.638 0 8.573 3.007 9.963 7.178.07.207.07.431 0 .639C20.577 16.49 16.64 19.5 12 19.5c-4.638 0-8.573-3.007-9.963-7.178Z"/><path d="M15 12a3 3 0 1 1-6 0 3 3 0 0 1 6 0Z"/></svg><span id="vp6" class="m" style="letter-spacing:0.617px">View Profile</span></button><button class="ib"><svg class="ic " width="12" height="12" viewBox="0 0 24 24" fill="none" stroke="currentColor" stroke-width="1.5" stroke-linecap="round" stroke-linejoin="round"><path d="m16.862 4.487 1.687-1.688a1.875 1.875 0 1 1 2.652 2.652L6.832 19.82a4.5 4.5 0 0 1-1.897 1.13l-2.685.8.8-2.685a4.5 4.5 0 0 1 1.13-1.897L16.863 4.487Zm0 0L19.5 7.125"/></svg></button><button class="ib del"><svg class="ic " width="12" height="12" viewBox="0 0 24 24" fill="none" stroke="currentColor" stroke-width="1.5" stroke-linecap="round" stroke-linejoin="round"><path d="m20.25 7.5-.625 10.632a2.25 2.25 0 0 1-2.247 2.118H6.622a2.25 2.25 0 0 1-2.247-2.118L3.75 7.5M10 11.25h4M3.375 7.5h17.25c.621 0 1.125-.504 1.125-1.125v-1.5c0-.621-.504-1.125-1.125-1.125H3.375c-.621 0-1.125.504-1.125 1.125v1.5c0 .621.504 1.125 1.125 1.125Z"/></svg></button></div>
</div>
<div class="tr">
<div class="td c1"><div class="av"><span id="ini7">LO</span></div><div class="stu"><div class="nm"><span id="nm7" style="letter-spacing:0.067px">Laetitia OWONA</span></div><div class="sub"><span id="id7" style="letter-spacing:0.246px">ID: 2c9aec</span></div><div class="sub"><span id="bo7" style="letter-spacing:0.182px">Born on April 3, 2017</span></div></div></div>
<div class="td c2"><div class="par"><div class="pn"><span id="pn7" class="m" style="letter-spacing:0.196px">parent 1 mobile</span></div><div class="sub pe"><span id="em7" style="letter-spacing:0.342px">paypalcompte2020@gmail.com</span></div><div class="sub pe"><span id="ph7" style="letter-spacing:0.520px">+237693937344</span></div></div></div>
<div class="td c3"><span id="kl7" class="kl" style="letter-spacing:-0.549px">CE1 A</span></div>
<div class="td c4"><span class="pill act"><i class="dot"></i><span id="st7" class="m" style="letter-spacing:0.402px">Active</span></span></div>
<div class="td c5"><div><span class="pill paid"><span id="fp7" class="m" style="letter-spacing:0.128px">Paid</span></span><div class="sub fsub"><span id="fs7" style="letter-spacing:0.251px">Paid in full</span></div></div></div>
<div class="td c6"><button class="vb"><svg class="ic " width="12" height="12" viewBox="0 0 24 24" fill="none" stroke="currentColor" stroke-width="1.5" stroke-linecap="round" stroke-linejoin="round"><path d="M2.036 12.322a1.012 1.012 0 0 1 0-.639C3.423 7.51 7.36 4.5 12 4.5c4.638 0 8.573 3.007 9.963 7.178.07.207.07.431 0 .639C20.577 16.49 16.64 19.5 12 19.5c-4.638 0-8.573-3.007-9.963-7.178Z"/><path d="M15 12a3 3 0 1 1-6 0 3 3 0 0 1 6 0Z"/></svg><span id="vp7" class="m" style="letter-spacing:0.617px">View Profile</span></button><button class="ib"><svg class="ic " width="12" height="12" viewBox="0 0 24 24" fill="none" stroke="currentColor" stroke-width="1.5" stroke-linecap="round" stroke-linejoin="round"><path d="m16.862 4.487 1.687-1.688a1.875 1.875 0 1 1 2.652 2.652L6.832 19.82a4.5 4.5 0 0 1-1.897 1.13l-2.685.8.8-2.685a4.5 4.5 0 0 1 1.13-1.897L16.863 4.487Zm0 0L19.5 7.125"/></svg></button><button class="ib del"><svg class="ic " width="12" height="12" viewBox="0 0 24 24" fill="none" stroke="currentColor" stroke-width="1.5" stroke-linecap="round" stroke-linejoin="round"><path d="m20.25 7.5-.625 10.632a2.25 2.25 0 0 1-2.247 2.118H6.622a2.25 2.25 0 0 1-2.247-2.118L3.75 7.5M10 11.25h4M3.375 7.5h17.25c.621 0 1.125-.504 1.125-1.125v-1.5c0-.621-.504-1.125-1.125-1.125H3.375c-.621 0-1.125.504-1.125 1.125v1.5c0 .621.504 1.125 1.125 1.125Z"/></svg></button></div>
</div>
<div class="tr">
<div class="td c1"><div class="av"><span id="ini8">AE</span></div><div class="stu"><div class="nm"><span id="nm8" style="letter-spacing:-0.007px">Armel ESSINDI</span></div><div class="sub"><span id="id8" style="letter-spacing:0.280px">ID: 2c9ae8</span></div><div class="sub"><span id="bo8" style="letter-spacing:0.096px">Born on August 19, 2017</span></div></div></div>
<div class="td c2"><div class="par"><div class="pn"><span id="pn8" class="m" style="letter-spacing:0.066px">Victor ESSINDI</span></div><div class="sub pe"><span id="em8" style="letter-spacing:0.265px">victor.essindi@gmail.com</span></div><div class="sub pe"><span id="ph8" style="letter-spacing:0.101px">+237 691 100 007</span></div></div></div>
<div class="td c3"><span id="kl8" class="kl" style="letter-spacing:-0.549px">CE1 A</span></div>
<div class="td c4"><span class="pill act"><i class="dot"></i><span id="st8" class="m" style="letter-spacing:0.402px">Active</span></span></div>
<div class="td c5"><div><span class="pill unpaid"><span id="fp8" class="m" style="letter-spacing:0.406px">Unpaid</span></span><div class="sub fsub"><span id="fs8" style="letter-spacing:0.241px">95&#8239;000 XAF remaining</span></div></div></div>
<div class="td c6"><button class="vb"><svg class="ic " width="12" height="12" viewBox="0 0 24 24" fill="none" stroke="currentColor" stroke-width="1.5" stroke-linecap="round" stroke-linejoin="round"><path d="M2.036 12.322a1.012 1.012 0 0 1 0-.639C3.423 7.51 7.36 4.5 12 4.5c4.638 0 8.573 3.007 9.963 7.178.07.207.07.431 0 .639C20.577 16.49 16.64 19.5 12 19.5c-4.638 0-8.573-3.007-9.963-7.178Z"/><path d="M15 12a3 3 0 1 1-6 0 3 3 0 0 1 6 0Z"/></svg><span id="vp8" class="m" style="letter-spacing:0.617px">View Profile</span></button><button class="ib"><svg class="ic " width="12" height="12" viewBox="0 0 24 24" fill="none" stroke="currentColor" stroke-width="1.5" stroke-linecap="round" stroke-linejoin="round"><path d="m16.862 4.487 1.687-1.688a1.875 1.875 0 1 1 2.652 2.652L6.832 19.82a4.5 4.5 0 0 1-1.897 1.13l-2.685.8.8-2.685a4.5 4.5 0 0 1 1.13-1.897L16.863 4.487Zm0 0L19.5 7.125"/></svg></button><button class="ib del"><svg class="ic " width="12" height="12" viewBox="0 0 24 24" fill="none" stroke="currentColor" stroke-width="1.5" stroke-linecap="round" stroke-linejoin="round"><path d="m20.25 7.5-.625 10.632a2.25 2.25 0 0 1-2.247 2.118H6.622a2.25 2.25 0 0 1-2.247-2.118L3.75 7.5M10 11.25h4M3.375 7.5h17.25c.621 0 1.125-.504 1.125-1.125v-1.5c0-.621-.504-1.125-1.125-1.125H3.375c-.621 0-1.125.504-1.125 1.125v1.5c0 .621.504 1.125 1.125 1.125Z"/></svg></button></div>
</div>
<div class="tr">
<div class="td c1"><div class="av"><span id="ini9">SN</span></div><div class="stu"><div class="nm"><span id="nm9" style="letter-spacing:-0.188px">Stella NGO BELA</span></div><div class="sub"><span id="id9" style="letter-spacing:0.335px">ID: 2c9ae4</span></div><div class="sub"><span id="bo9" style="letter-spacing:0.189px">Born on December 2, 2016</span></div></div></div>
<div class="td c2"><div class="par"><div class="pn"><span id="pn9" class="m" style="letter-spacing:-0.109px">Pauline NGO BELA</span></div><div class="sub pe"><span id="em9" style="letter-spacing:0.236px">pauline.ngobela@gmail.com</span></div><div class="sub pe"><span id="ph9" style="letter-spacing:0.166px">+237 691 100 006</span></div></div></div>
<div class="td c3"><span id="kl9" class="kl" style="letter-spacing:-0.549px">CE1 A</span></div>
<div class="td c4"><span class="pill act"><i class="dot"></i><span id="st9" class="m" style="letter-spacing:0.402px">Active</span></span></div>
<div class="td c5"><div><span class="pill paid"><span id="fp9" class="m" style="letter-spacing:0.128px">Paid</span></span><div class="sub fsub"><span id="fs9" style="letter-spacing:0.251px">Paid in full</span></div></div></div>
<div class="td c6"><button class="vb"><svg class="ic " width="12" height="12" viewBox="0 0 24 24" fill="none" stroke="currentColor" stroke-width="1.5" stroke-linecap="round" stroke-linejoin="round"><path d="M2.036 12.322a1.012 1.012 0 0 1 0-.639C3.423 7.51 7.36 4.5 12 4.5c4.638 0 8.573 3.007 9.963 7.178.07.207.07.431 0 .639C20.577 16.49 16.64 19.5 12 19.5c-4.638 0-8.573-3.007-9.963-7.178Z"/><path d="M15 12a3 3 0 1 1-6 0 3 3 0 0 1 6 0Z"/></svg><span id="vp9" class="m" style="letter-spacing:0.617px">View Profile</span></button><button class="ib"><svg class="ic " width="12" height="12" viewBox="0 0 24 24" fill="none" stroke="currentColor" stroke-width="1.5" stroke-linecap="round" stroke-linejoin="round"><path d="m16.862 4.487 1.687-1.688a1.875 1.875 0 1 1 2.652 2.652L6.832 19.82a4.5 4.5 0 0 1-1.897 1.13l-2.685.8.8-2.685a4.5 4.5 0 0 1 1.13-1.897L16.863 4.487Zm0 0L19.5 7.125"/></svg></button><button class="ib del"><svg class="ic " width="12" height="12" viewBox="0 0 24 24" fill="none" stroke="currentColor" stroke-width="1.5" stroke-linecap="round" stroke-linejoin="round"><path d="m20.25 7.5-.625 10.632a2.25 2.25 0 0 1-2.247 2.118H6.622a2.25 2.25 0 0 1-2.247-2.118L3.75 7.5M10 11.25h4M3.375 7.5h17.25c.621 0 1.125-.504 1.125-1.125v-1.5c0-.621-.504-1.125-1.125-1.125H3.375c-.621 0-1.125.504-1.125 1.125v1.5c0 .621.504 1.125 1.125 1.125Z"/></svg></button></div>
</div>
<div class="tfoot">
<span id="cnt" class="cnt" style="letter-spacing:-0.035px">1 - 10 sur 17 étudiants</span>
<div class="pager"><span class="pg"><svg class="ic " width="14" height="14" viewBox="0 0 24 24" fill="none" stroke="currentColor" stroke-width="2" stroke-linecap="round" stroke-linejoin="round"><path d="M15.75 19.5 8.25 12l7.5-7.5"/></svg></span><span class="pg cur"><span id="p1" class="m">1</span></span><span class="pg"><span id="p2" class="m">2</span></span><span class="pg"><svg class="ic " width="14" height="14" viewBox="0 0 24 24" fill="none" stroke="currentColor" stroke-width="2" stroke-linecap="round" stroke-linejoin="round"><path d="m8.25 4.5 7.5 7.5-7.5 7.5"/></svg></span></div>
</div>
</section>
</main>
<div class="fab"><svg width="48" height="48" viewBox="0 0 48 48"><defs>
<linearGradient id="ir" x1="0" x2="1" y1=".35" y2=".65"><stop offset="0" stop-color="#8cc63f"/><stop offset=".45" stop-color="#b9dc6a"/><stop offset=".75" stop-color="#fbd562"/><stop offset="1" stop-color="#f9b45c"/></linearGradient>
<linearGradient id="ir2" x1="0" x2="0" y1="0" y2="1"><stop offset="0" stop-color="#b4ecb0" stop-opacity=".9"/><stop offset=".45" stop-color="#ffffff" stop-opacity="0"/><stop offset=".8" stop-color="#a5d40e" stop-opacity=".9"/><stop offset="1" stop-color="#a0d010"/></linearGradient>
<linearGradient id="isky" x1="0" x2="0" y1="0" y2="1"><stop offset="0" stop-color="#74d8fb"/><stop offset=".17" stop-color="#b4ecd8"/><stop offset=".3" stop-color="#f7f6b4"/><stop offset=".45" stop-color="#ffd592"/><stop offset=".62" stop-color="#ffa578"/><stop offset=".75" stop-color="#ff8d7c"/></linearGradient>
<linearGradient id="ihill" x1=".8" x2=".25" y1=".02" y2=".5"><stop offset="0" stop-color="#fff200"/><stop offset=".3" stop-color="#e4e80c"/><stop offset=".65" stop-color="#9cc408"/><stop offset="1" stop-color="#5c9e0c"/></linearGradient>
<linearGradient id="isun" x1="0" x2="1" y1="0" y2="1"><stop offset="0" stop-color="#ffc21a"/><stop offset="1" stop-color="#ffa200"/></linearGradient>
<linearGradient id="ich" x1="0" x2="1"><stop offset="0" stop-color="#ff2a2a"/><stop offset="1" stop-color="#ff1f9a"/></linearGradient>
<clipPath id="icl"><circle cx="24" cy="24" r="20"/></clipPath>
<filter id="ish" x="-30%" y="-30%" width="160%" height="160%"><feGaussianBlur stdDeviation="1.6"/></filter>
</defs>
<circle cx="24" cy="26" r="22.5" fill="#0f172a" opacity=".16" filter="url(#ish)"/>
<circle cx="24" cy="24" r="24" fill="url(#ir)"/><circle cx="24" cy="24" r="24" fill="url(#ir2)"/>
<g clip-path="url(#icl)">
<rect x="4" y="4" width="40" height="40" fill="url(#isky)"/>
<rect x="4" y="30" width="40" height="14" fill="#00cfe4"/>
<path d="M4 31.6c3-1.2 6-1.2 9 0s6 1.2 9 0 6-1.2 9 0 6 1.2 9 0 4-1 4-1V44H4Z" fill="#00a3ba"/>
<path d="M4 33.6c3-1.2 6-1.2 9 0s6 1.2 9 0 6-1.2 9 0 6 1.2 9 0 4-1 4-1V44H4Z" fill="#007f9c"/>
<path d="M4 35.6c3-1.2 6-1.2 9 0s6 1.2 9 0 6-1.2 9 0 6 1.2 9 0 4-1 4-1V44H4Z" fill="#035f7e"/>
<path d="M4 37.6c3-1.2 6-1.2 9 0s6 1.2 9 0 6-1.2 9 0 6 1.2 9 0 4-1 4-1V44H4Z" fill="#06415e"/>
<circle cx="39.5" cy="9.5" r="7.2" fill="url(#isun)"/>
<g stroke="#ff7a12" stroke-width=".75" stroke-linecap="round"><path d="M29.3 7.2l1.7.35M29.2 9.8l1.75-.1M29.5 12.5l1.7-.6M30.6 15l1.5-.95M32.2 17.1l1.2-1.25M34.3 18.6l.75-1.55M37 19.5l.3-1.7M39.8 19.7l-.2-1.7"/></g>
<path d="M16.4 31.2c.7-4.6 1-9 .4-14l2-.3c.5 5.200 1.400 9.800 3.300 14.300Z" fill="#8a4a12"/>
<path d="M16.9 23c.4 2.600.2 5.400-.3 8.200l2 0c-.5-2.900-1-5.600-1.700-8.200Z" fill="#5e3008" opacity=".55"/>
<g fill="#6fd23a" stroke="#2f8f12" stroke-width=".45" stroke-linejoin="round" transform="translate(-1.000 -4.300)">
<path d="M18.6 21.200c-2.800-.7-5.700.4-7.600 3.400-.3 2.300-.4 4.100-.300 5.800 1.300-1.200 2.300-2.100 3-3.700.4 2.400.200 4.200.300 6.300 2.300-2.600 4.300-6.400 4.600-11.800Z"/>
<path d="M18.600 21.200c1.800-1.100 5.300-.600 6.700 3.200.6 1.600.7 2.800.7 4-1.200-.6-2.100-1.300-3-2.600-1.200-1.900-2.600-3.500-4.400-4.600Z"/>
<path d="M18.600 21.200c-1.700-1.900-4.400-2.700-7-1.700 1.200.5 1.900 1 2.500 1.800 1.600-.4 3-.400 4.500-.100Z"/>
<path d="M18.600 21.200c2.200-1.900 5.700-2.300 8.100.600.500.900.700 1.700.800 2.500-1.500-.300-2.900-.300-4.100.1-1.500-1.600-3-2.600-4.800-3.200Z"/>
<path d="M18.600 21.200c.3-2.200 1.700-4 4.200-4.600-.1 1-.1 1.700.2 2.500-1.800.300-3.300.900-4.400 2.100Z"/>
</g>
<path d="M21.8 29.6l.5-5.4M24.9 29.6l.3-1.800M31.400 31.200l.4-2.400" stroke="#12100e" stroke-width=".65" stroke-linecap="round"/>
<path d="M22 23.900c1.400 1.900 2.600 3.400 4.100 4 2 .6 3.900.6 5.900.9" stroke="url(#ich)" stroke-width="1.250" stroke-linecap="round" fill="none"/>
<ellipse cx="24.200" cy="44" rx="15" ry="14.300" fill="url(#ihill)"/>
</g>
</svg>
</div>
</div>
</body>
</html>
